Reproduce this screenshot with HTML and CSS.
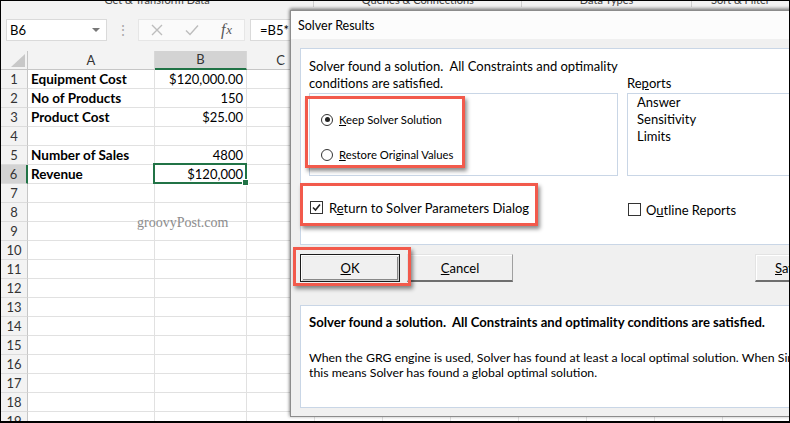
FILE: index.html
```html
<!DOCTYPE html>
<html>
<head>
<meta charset="utf-8">
<link rel="stylesheet" href="styles.css">
</head>
<body>
<div class="frame">
  <div class="ribbon">
    <div class="rgroup g1"><span>Get &amp; Transform Data</span></div>
    <div class="rgroup g2"><span>Queries &amp; Connections</span></div>
    <div class="rgroup g3"><span>Data Types</span></div>
    <div class="rgroup g4"><span>Sort &amp; Filter</span></div>
  </div>
  <div class="fbar">
    <div class="namebox"><span>B6</span><span class="dd"></span></div>
    <div class="vdots">⋮</div>
    <div class="fxbox">
      <span class="fic">
        <svg width="14" height="14" viewBox="0 0 14 14"><path d="M2 2 L12 12 M12 2 L2 12" stroke="#bdbdbd" stroke-width="1.4" fill="none"/></svg>
      </span>
      <span class="fic">
        <svg width="16" height="14" viewBox="0 0 16 14"><path d="M2 7.5 L6 11.5 L14 2.5" stroke="#bdbdbd" stroke-width="1.4" fill="none"/></svg>
      </span>
      <span class="fic fx"><i>f</i><i class="x">x</i></span>
    </div>
    <div class="finput"><span>=B5*</span></div>
  </div>
  <div class="sheet">
    <div class="corner"></div><div class="hd">A</div><div class="hd on">B</div><div class="hd">C</div><div class="hd rest"></div>

    <div class="rh">1</div><div class="c bold">Equipment Cost</div><div class="c num">$120,000.00</div><div class="c"></div><div class="c rest"></div>
    <div class="rh">2</div><div class="c bold">No of Products</div><div class="c num">150</div><div class="c"></div><div class="c rest"></div>
    <div class="rh">3</div><div class="c bold">Product Cost</div><div class="c num">$25.00</div><div class="c"></div><div class="c rest"></div>
    <div class="rh">4</div><div class="c"></div><div class="c"></div><div class="c"></div><div class="c rest"></div>
    <div class="rh">5</div><div class="c bold">Number of Sales</div><div class="c num">4800</div><div class="c"></div><div class="c rest"></div>
    <div class="rh on">6</div><div class="c bold">Revenue</div><div class="c num sel">$120,000</div><div class="c"></div><div class="c rest"></div>
    <div class="rh">7</div><div class="c"></div><div class="c"></div><div class="c"></div><div class="c rest"></div>
    <div class="rh">8</div><div class="c"></div><div class="c"></div><div class="c"></div><div class="c rest"></div>
    <div class="rh">9</div><div class="c"></div><div class="c"></div><div class="c"></div><div class="c rest"></div>
    <div class="rh">10</div><div class="c"></div><div class="c"></div><div class="c"></div><div class="c rest"></div>
    <div class="rh">11</div><div class="c"></div><div class="c"></div><div class="c"></div><div class="c rest"></div>
    <div class="rh">12</div><div class="c"></div><div class="c"></div><div class="c"></div><div class="c rest"></div>
    <div class="rh">13</div><div class="c"></div><div class="c"></div><div class="c"></div><div class="c rest"></div>
    <div class="rh">14</div><div class="c"></div><div class="c"></div><div class="c"></div><div class="c rest"></div>
    <div class="rh">15</div><div class="c"></div><div class="c"></div><div class="c"></div><div class="c rest"></div>
    <div class="rh">16</div><div class="c"></div><div class="c"></div><div class="c"></div><div class="c rest"></div>
    <div class="rh">17</div><div class="c"></div><div class="c"></div><div class="c"></div><div class="c rest"></div>
    <div class="rh">18</div><div class="c"></div><div class="c"></div><div class="c"></div><div class="c rest"></div>
    <div class="rh">19</div><div class="c"></div><div class="c"></div><div class="c"></div><div class="c rest"></div>
  </div>

  <div class="watermark">groovyPost.com</div>

  <div class="dialog">
    <div class="dtitle">Solver Results</div>
    <div class="dbody">
      <div class="mainpanel">
        <div class="msg">Solver found a solution.&nbsp; All Constraints and optimality conditions are satisfied.</div>
        <div class="rlabel">Re<u>p</u>orts</div>
        <div class="group">
          <div class="opt"><span class="radio on"></span><span><u>K</u>eep Solver Solution</span></div>
          <div class="opt"><span class="radio"></span><span><u>R</u>estore Original Values</span></div>
        </div>
        <div class="list">
          <div>Answer</div>
          <div>Sensitivity</div>
          <div>Limits</div>
        </div>
        <div class="chk">
          <span class="box"><svg width="11" height="11" viewBox="0 0 11 11"><path d="M2 5.5 L4.5 8 L9 2.5" stroke="#222" stroke-width="1.6" fill="none"/></svg></span>
          <span>R<u>e</u>turn to Solver Parameters Dialog</span>
        </div>
        <div class="chk chk2">
          <span class="box"></span>
          <span>O<u>u</u>tline Reports</span>
        </div>
      </div>
      <div class="buttons">
        <div class="btn def"><span><u>O</u>K</span></div>
        <div class="btn"><span><u>C</u>ancel</span></div>
        <div class="btn save"><span><u>S</u>ave Scenario...</span></div>
      </div>
      <div class="infopanel">
        <div class="ibold">Solver found a solution.&nbsp; All Constraints and optimality conditions are satisfied.</div>
        <div class="itext">When the GRG engine is used, Solver has found at least a local optimal solution. When Simplex LP is used,<br>this means Solver has found a global optimal solution.</div>
      </div>
    </div>
  </div>

  <div class="hl hl1"></div>
  <div class="hl hl2"></div>
  <div class="hl hl3"></div>
</div>
</body>
</html>
```

FILE: styles.css
```css
html, body {
  margin: 0;
  padding: 0;
  background: #000;
}

.frame {
  position: relative;
  width: 790px;
  height: 423px;
  box-sizing: border-box;
  border: 1px solid #000;
  border-bottom-width: 2px;
  overflow: hidden;
  background: #fff;
  font-family: "Lato", "Liberation Sans", sans-serif;
  color: #000;
}

/* ribbon strip (cut off) */
.ribbon {
  height: 11px;
  background: #f3f3f3;
  display: flex;
  overflow: hidden;
}
.rgroup {
  position: relative;
  text-align: center;
  font-size: 11px;
  line-height: 11px;
  color: #444;
  border-right: 1px solid #cfcfcf;
  height: 6px;
  overflow: hidden;
}
.rgroup span {
  display: block;
  margin-top: -7px;
}
.g1 { width: 321px; }
.g2 { width: 213px; }
.g3 { width: 173px; }
.g4 { width: 100px; border-right: none; }

/* formula bar */
.fbar {
  height: 39px;
  box-sizing: border-box;
  background: #f3f3f3;
  display: flex;
  align-items: flex-start;
  padding: 7px 0 0 5px;
}
.namebox {
  width: 101px;
  height: 22px;
  box-sizing: border-box;
  background: #fff;
  border: 1px solid #dadada;
  display: flex;
  align-items: center;
  justify-content: space-between;
  padding: 0 6px 0 3px;
  font-size: 13px;
}
.dd {
  width: 0;
  height: 0;
  border-left: 4px solid transparent;
  border-right: 4px solid transparent;
  border-top: 4px solid #777;
}
.vdots {
  width: 31px;
  text-align: center;
  color: #a8a8a8;
  font-size: 14px;
  line-height: 22px;
}
.fxbox {
  width: 107px;
  height: 22px;
  box-sizing: border-box;
  background: #fafafa;
  border: 1px solid #e6e6e6;
  display: flex;
}
.fic {
  flex: 1;
  display: flex;
  align-items: center;
  justify-content: center;
}
.fx {
  font-family: "Liberation Serif", serif;
  font-size: 16px;
  color: #555;
}
.fx .x { font-size: 13px; margin-left: 1px; }
.finput {
  margin-left: 5px;
  width: 40px;
  height: 22px;
  box-sizing: border-box;
  background: #fff;
  border: 1px solid #dadada;
  border-right: none;
  padding-left: 9px;
  font-size: 13px;
  line-height: 20px;
  white-space: nowrap;
  overflow: hidden;
}

/* sheet */
.sheet {
  display: grid;
  grid-template-columns: 27px 127px 92px 68px 1fr;
  grid-auto-rows: 19px;
  font-size: 13px;
}
.corner {
  background: #f3f3f3;
  border-right: 1px solid #c6c6c6;
  border-bottom: 1px solid #c6c6c6;
  position: relative;
}
.corner::after {
  content: "";
  position: absolute;
  right: 2px;
  bottom: 2px;
  width: 0;
  height: 0;
  border-left: 14px solid transparent;
  border-bottom: 13px solid #c8c8c8;
}
.hd {
  background: #f3f3f3;
  border-right: 1px solid #d8d8d8;
  border-bottom: 1px solid #c6c6c6;
  text-align: center;
  line-height: 18px;
  color: #333;
}
.hd.on {
  background: #d3d3d3;
  border-bottom: 2px solid #217346;
  line-height: 17px;
}
.hd.rest, .c.rest {
  border-right: none;
}
.hd.rest {
  background-image: repeating-linear-gradient(to right, transparent 0 67px, #d8d8d8 67px 68px);
}
.rh {
  background: #f3f3f3;
  border-right: 1px solid #c6c6c6;
  border-bottom: 1px solid #dcdcdc;
  text-align: center;
  line-height: 18px;
  color: #333;
}
.rh.on {
  background: #d3d3d3;
  border-right: 2px solid #217346;
}
.c {
  border-right: 1px solid #e1e1e1;
  border-bottom: 1px solid #e1e1e1;
  padding: 0 3px;
  line-height: 18px;
  white-space: nowrap;
}
.c.rest {
  background-image: repeating-linear-gradient(to right, transparent 0 67px, #e1e1e1 67px 68px);
}
.bold { font-weight: 700; font-size: 13.5px; }
.num { text-align: right; }
.sel { position: relative; }
.sel::after {
  content: "";
  position: absolute;
  left: -2px;
  top: -2px;
  right: -1px;
  bottom: -1px;
  border: 2px solid #217346;
}
.sel::before {
  content: "";
  position: absolute;
  right: -3px;
  bottom: -3px;
  width: 5px;
  height: 5px;
  background: #217346;
  border: 1px solid #fff;
  z-index: 2;
}

.watermark {
  position: absolute;
  left: 136px;
  top: 214px;
  font-family: "Liberation Serif", serif;
  font-size: 14px;
  color: #8c8c8c;
}

/* dialog */
.dialog {
  position: absolute;
  left: 289px;
  top: 9px;
  width: 540px;
  border: 1px solid #8c8c8c;
  background: #f0f0f0;
  box-shadow: 0 -2px 3px rgba(0,0,0,0.35), -1px 0 3px rgba(0,0,0,0.25);
  font-size: 12.5px;
}
.dtitle {
  height: 28px;
  background: #fcfcfc;
  padding-left: 7px;
  line-height: 29px;
  font-size: 12.5px;
}
.dbody {
  padding: 9px 0 8px 9px;
  display: flex;
  flex-direction: column;
}
.mainpanel {
  height: 197px;
  box-sizing: border-box;
  background: #fff;
  border: 1px solid #c9d6e6;
  padding: 9px 0 0 8px;
  display: grid;
  grid-template-columns: 309px 1fr;
  grid-template-rows: 34px 84px 17px;
  column-gap: 9px;
  row-gap: 0;
}
.msg {
  line-height: 17px;
  font-size: 13px;
  width: 312px;
}
.rlabel {
  align-self: end;
  line-height: 17px;
  font-size: 13px;
}
.group {
  margin-top: 1px;
  border: 1px solid #c9d6e6;
  padding: 17px 0 0 11px;
}
.opt {
  display: flex;
  align-items: center;
  gap: 6px;
  height: 17px;
  font-size: 11.3px;
}
.opt + .opt { margin-top: 18px; }
.radio {
  width: 10px;
  height: 10px;
  border: 1px solid #333;
  border-radius: 50%;
  position: relative;
  background: #fff;
}
.radio.on::after {
  content: "";
  position: absolute;
  left: 2.5px;
  top: 2.5px;
  width: 5px;
  height: 5px;
  border-radius: 50%;
  background: #222;
}
.list {
  margin-top: 1px;
  margin-right: 6px;
  border: 1px solid #c9d6e6;
  padding: 0 0 0 9px;
  line-height: 17px;
  font-size: 13px;
}
.chk {
  margin-top: 23px;
  display: flex;
  align-items: center;
  gap: 6px;
  height: 17px;
  font-size: 13px;
  padding-left: 1px;
}
.chk2 { margin-top: 25px; padding-left: 1px; gap: 5px; }
.box {
  width: 11px;
  height: 11px;
  border: 1px solid #333;
  background: #fff;
  display: flex;
}

.buttons {
  display: flex;
  margin-top: 9px;
  height: 28px;
}
.btn {
  flex: none;
  width: 106px;
  height: 28px;
  box-sizing: border-box;
  background: #f0f0f0;
  border-top: 1px solid #e3e3e3;
  border-left: 1px solid #e3e3e3;
  border-right: 1px solid #a0a0a0;
  border-bottom: 2px solid #6e6e6e;
  box-shadow: inset 1px 1px 0 #fff;
  display: flex;
  align-items: center;
  justify-content: center;
  font-size: 13px;
}
.btn.def {
  width: 100px;
  margin-right: 7px;
  border: 1px solid #1c1c1c;
  box-shadow: inset 1px 1px 0 #fff, inset -1px -1px 0 #d0d0d0, inset 2px 2px 0 #e8e8e8, inset -2px -2px 0 #888;
}
.btn.save {
  margin-left: 242px;
  width: 106px;
  justify-content: flex-start;
  padding-left: 19px;
  white-space: nowrap;
}

.infopanel {
  margin-top: 23px;
  height: 103px;
  box-sizing: border-box;
  background: #fff;
  border: 1px solid #c9d6e6;
  padding: 8px 0 0 8px;
  white-space: nowrap;
  overflow: hidden;
}
.ibold {
  font-weight: 700;
  font-size: 13.1px;
  line-height: 16px;
}
.itext {
  margin-top: 20px;
  font-size: 12.3px;
  line-height: 15px;
}

/* red highlight annotations */
.hl {
  position: absolute;
  border: 3px solid #f25a4c;
  box-shadow: 2px 3px 4px rgba(0,0,0,0.45);
}
.hl1 { left: 304px; top: 95px; width: 154px; height: 66px; }
.hl2 { left: 299px; top: 182px; width: 232px; height: 37px; }
.hl3 { left: 292px; top: 246px; width: 112px; height: 33px; }
```
